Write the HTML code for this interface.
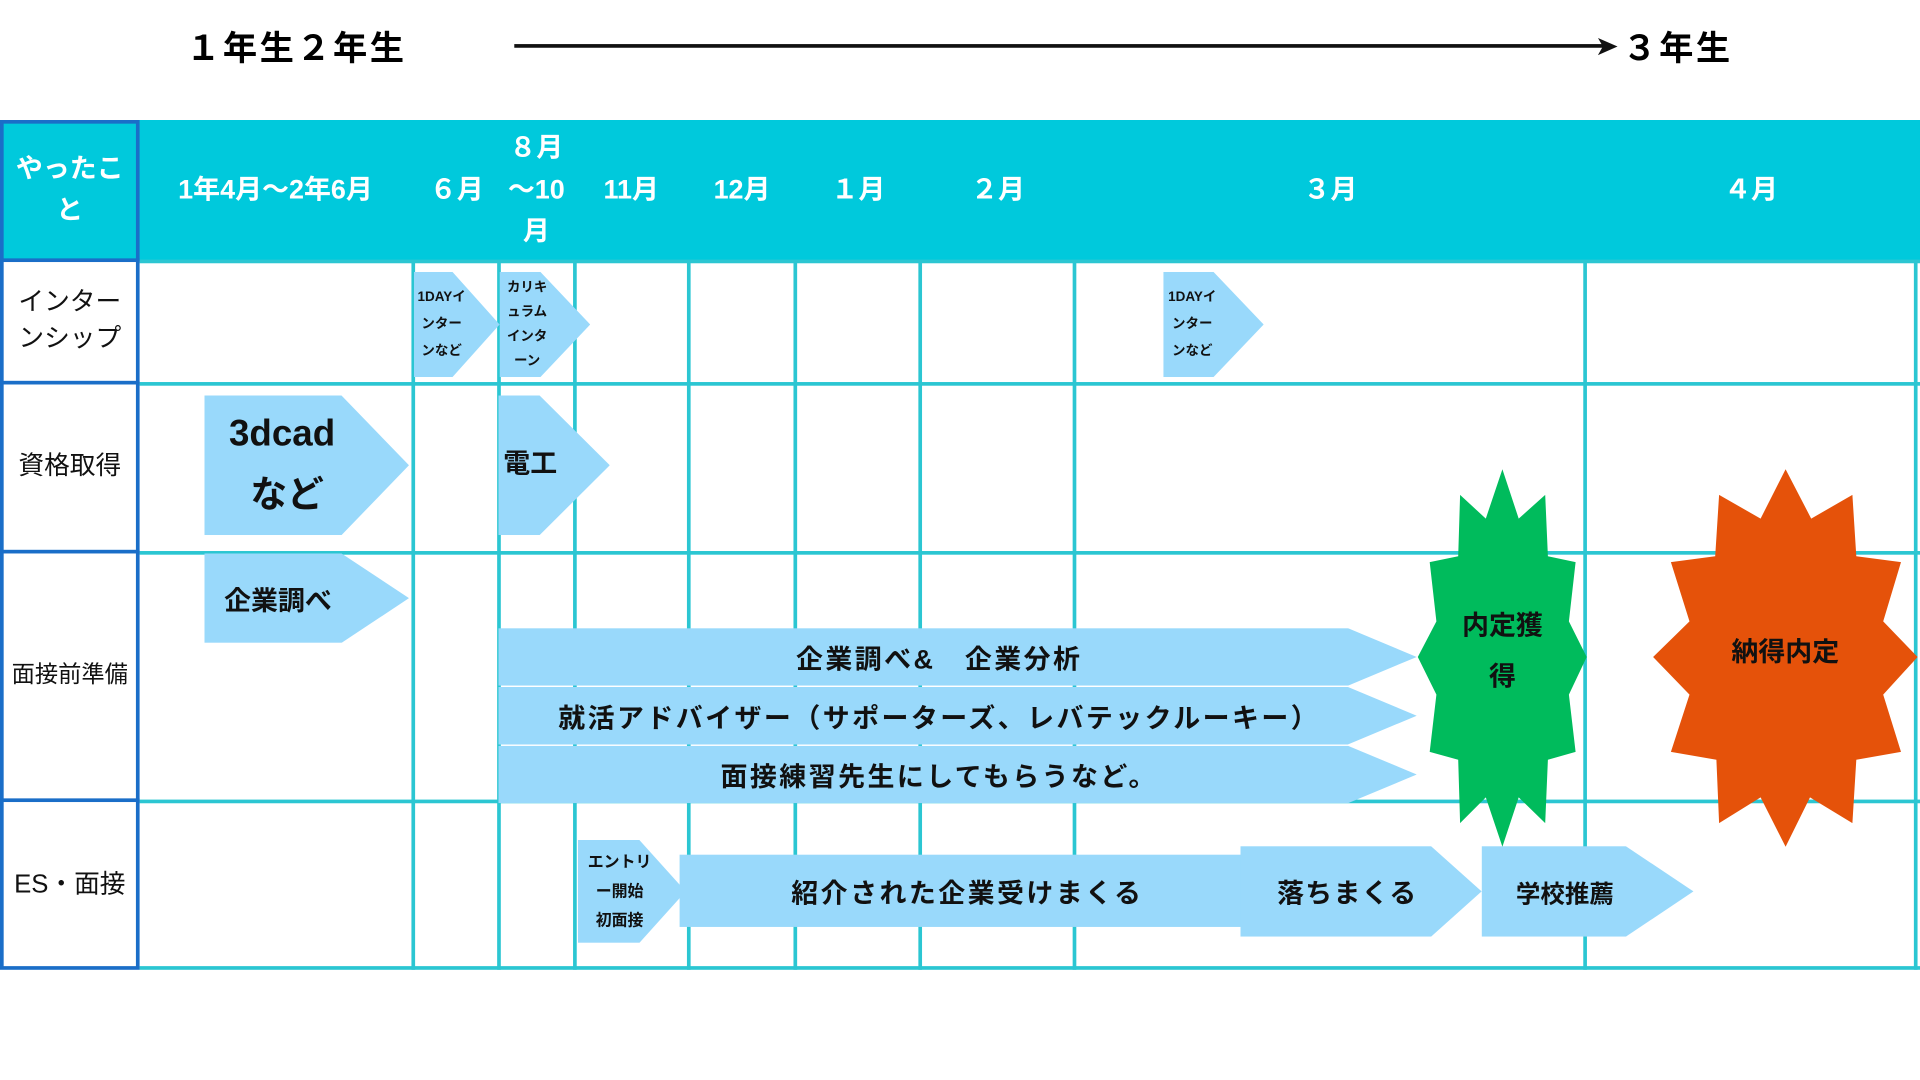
<!DOCTYPE html>
<html><head><meta charset="utf-8"><style>
body{margin:0;width:1920px;height:1080px;overflow:hidden;background:#fff;font-family:"Liberation Sans","Noto Sans CJK JP",sans-serif;}
#w{position:absolute;left:0;top:0;width:1568px;height:882px;transform:scale(1.22449);transform-origin:0 0;}
.a{position:absolute}
.v{position:absolute;width:3px;background:#2bc6d2;top:213px;height:579px}
.h{position:absolute;height:3px;background:#2bc6d2;left:114px;width:1454px}
.hd{position:absolute;color:#fff;font-weight:bold;font-size:22px;text-align:center;line-height:34px}
.rl{position:absolute;left:0;width:114px;text-align:center;font-size:21px;color:#111;line-height:30px}
.ar{position:absolute;background:#99d9fb;display:flex;align-items:center;justify-content:center;font-weight:bold;color:#111;text-align:center}
.t{position:absolute;font-weight:bold;color:#111;text-align:center}
.ls{letter-spacing:2px}
</style></head><body><div id="w">
<div class="a" style="left:152px;top:18px;font-size:28px;font-weight:bold;letter-spacing:2px">１年生２年生</div>
<div class="a" style="left:420px;top:36px;width:895px;height:3px;background:#111"></div>
<svg class="a" style="left:1305px;top:29px" width="18" height="18"><polygon points="0,2 16,9 0,16 4,9" fill="#111"/></svg>
<div class="a" style="left:1325px;top:18px;font-size:28px;font-weight:bold;letter-spacing:2px">３年生</div>

<div class="a" style="left:0;top:98px;width:1568px;height:115px;background:#00c9dc"></div>
<div class="v" style="left:336px"></div><div class="v" style="left:406px"></div><div class="v" style="left:468px"></div><div class="v" style="left:561px"></div><div class="v" style="left:648px"></div><div class="v" style="left:750px"></div><div class="v" style="left:876px"></div><div class="v" style="left:1293px"></div><div class="v" style="left:1563px"></div>
<div class="h" style="top:212px"></div><div class="h" style="top:312px"></div><div class="h" style="top:450px"></div><div class="h" style="top:653px"></div><div class="h" style="top:789px"></div>
<div class="a" style="left:0;top:98px;width:108px;height:688px;border:3px solid #1a6ec8"></div>
<div class="a" style="left:0;top:211px;width:114px;height:3px;background:#1a6ec8"></div>
<div class="a" style="left:0;top:311px;width:114px;height:3px;background:#1a6ec8"></div>
<div class="a" style="left:0;top:449px;width:114px;height:3px;background:#1a6ec8"></div>
<div class="a" style="left:0;top:652px;width:114px;height:3px;background:#1a6ec8"></div>

<div class="hd" style="left:0;width:114px;top:121px">やったこ<br>と</div>
<div class="hd" style="left:125px;width:200px;top:138px">1年4月～2年6月</div>
<div class="hd" style="left:340px;width:66px;top:138px">６月</div>
<div class="hd" style="left:408px;width:60px;top:104px">８月<br>～10<br>月</div>
<div class="hd" style="left:470px;width:91px;top:138px">11月</div>
<div class="hd" style="left:563px;width:86px;top:138px">12月</div>
<div class="hd" style="left:650px;width:102px;top:138px">１月</div>
<div class="hd" style="left:752px;width:126px;top:138px">２月</div>
<div class="hd" style="left:878px;width:417px;top:138px">３月</div>
<div class="hd" style="left:1295px;width:270px;top:138px">４月</div>

<div class="rl" style="top:232px">インター<br>ンシップ</div>
<div class="rl" style="top:366px">資格取得</div>
<div class="rl" style="top:537px;font-size:19px">面接前準備</div>
<div class="rl" style="top:708px">ES・面接</div>

<div class="ar" style="left:338px;top:222px;width:70px;height:86px;clip-path:polygon(0 0,45% 0,100% 50%,45% 100%,0 100%);font-size:11px;line-height:22px;justify-content:flex-start;padding-left:3px;box-sizing:border-box">1DAYイ<br>ンター<br>ンなど</div>
<div class="ar" style="left:408px;top:222px;width:74px;height:86px;clip-path:polygon(0 0,45% 0,100% 50%,45% 100%,0 100%);font-size:11px;line-height:20px;justify-content:flex-start;padding-left:6px;box-sizing:border-box">カリキ<br>ュラム<br>インタ<br>ーン</div>
<div class="ar" style="left:950px;top:222px;width:82px;height:86px;clip-path:polygon(0 0,50% 0,100% 50%,50% 100%,0 100%);font-size:11px;line-height:22px;justify-content:flex-start;padding-left:4px;box-sizing:border-box">1DAYイ<br>ンター<br>ンなど</div>
<div class="ar" style="left:167px;top:323px;width:167px;height:114px;clip-path:polygon(0 0,67% 0,100% 50%,67% 100%,0 100%);font-size:30px;line-height:50px;justify-content:flex-start;padding-left:20px;box-sizing:border-box">3dcad<br>&nbsp;など</div>
<div class="ar" style="left:407px;top:323px;width:91px;height:114px;clip-path:polygon(0 0,37% 0,100% 50%,37% 100%,0 100%);font-size:22px;justify-content:flex-start;padding-left:4px;box-sizing:border-box;padding-bottom:6px">電工</div>
<div class="ar" style="left:167px;top:452px;width:167px;height:73px;clip-path:polygon(0 0,67% 0,100% 50%,67% 100%,0 100%);font-size:22px;justify-content:flex-start;padding-left:16px;box-sizing:border-box">企業調べ</div>
<div class="ar ls" style="left:407px;top:513px;width:750px;height:47px;clip-path:polygon(0 0,92.5% 0,100% 50%,92.5% 100%,0 100%);font-size:22px;padding-right:30px;box-sizing:border-box">企業調べ&amp;　企業分析</div>
<div class="ar ls" style="left:407px;top:561px;width:750px;height:47px;clip-path:polygon(0 0,92.5% 0,100% 50%,92.5% 100%,0 100%);font-size:22px;padding-right:30px;box-sizing:border-box">就活アドバイザー（サポーターズ、レバテックルーキー）</div>
<div class="ar ls" style="left:407px;top:609px;width:750px;height:47px;clip-path:polygon(0 0,92.5% 0,100% 50%,92.5% 100%,0 100%);font-size:22px;padding-right:30px;box-sizing:border-box">面接練習先生にしてもらうなど。</div>
<div class="ar" style="left:472px;top:686px;width:88px;height:84px;clip-path:polygon(0 0,57% 0,100% 50%,57% 100%,0 100%);font-size:13px;line-height:24px;justify-content:flex-start;padding-left:8px;box-sizing:border-box">エントリ<br>ー開始<br>初面接</div>
<div class="ar ls" style="left:555px;top:698px;width:470px;height:59px;font-size:22px">紹介された企業受けまくる</div>
<div class="ar" style="left:1013px;top:691px;width:197px;height:74px;clip-path:polygon(0 0,79% 0,100% 50%,79% 100%,0 100%);font-size:22px;justify-content:flex-start;padding-left:30px;box-sizing:border-box;letter-spacing:1px">落ちまくる</div>
<div class="ar" style="left:1210px;top:691px;width:173px;height:74px;clip-path:polygon(0 0,68% 0,100% 50%,68% 100%,0 100%);font-size:20px;justify-content:flex-start;padding-left:28px;box-sizing:border-box">学校推薦</div>

<svg class="a" style="left:0;top:0" width="1568" height="882" viewBox="0 0 1920 1080">
<polygon fill="#00bb5c" points="1502.4,469.2 1518.7,518.6 1545.2,494.9 1547.9,556.2 1575.6,562.1 1568.9,621.4 1586.7,657 1568.9,694.6 1575.6,751.9 1547.9,759.8 1545.2,823.1 1518.7,797.4 1502.4,846.8 1485.8,797.4 1460.1,823.1 1458.2,759.8 1429.7,751.9 1436.4,694.6 1417.8,657 1436.4,621.4 1429.7,562.1 1458.2,556.2 1460.1,494.9 1485.8,518.6"/>
<polygon fill="#e5520a" points="1785.6,469.2 1811.2,518.6 1852.4,494.9 1856.3,556.2 1901,562.1 1883.2,621.4 1917.6,657 1883.2,694.6 1901,751.9 1856.3,759.8 1852.4,823.1 1810,797.4 1785.6,846.8 1760.6,797.4 1719.1,823.1 1716.4,759.8 1670.9,751.9 1689.5,694.6 1653.1,657 1689.5,621.4 1670.9,562.1 1715.2,556.2 1719.1,494.9 1760.6,518.6"/>
</svg>
<div class="t" style="left:1167px;width:120px;top:490px;font-size:22px;line-height:42px">内定獲<br>得</div>
<div class="t" style="left:1378px;width:160px;top:515px;font-size:22px">納得内定</div>
</div></body></html>
